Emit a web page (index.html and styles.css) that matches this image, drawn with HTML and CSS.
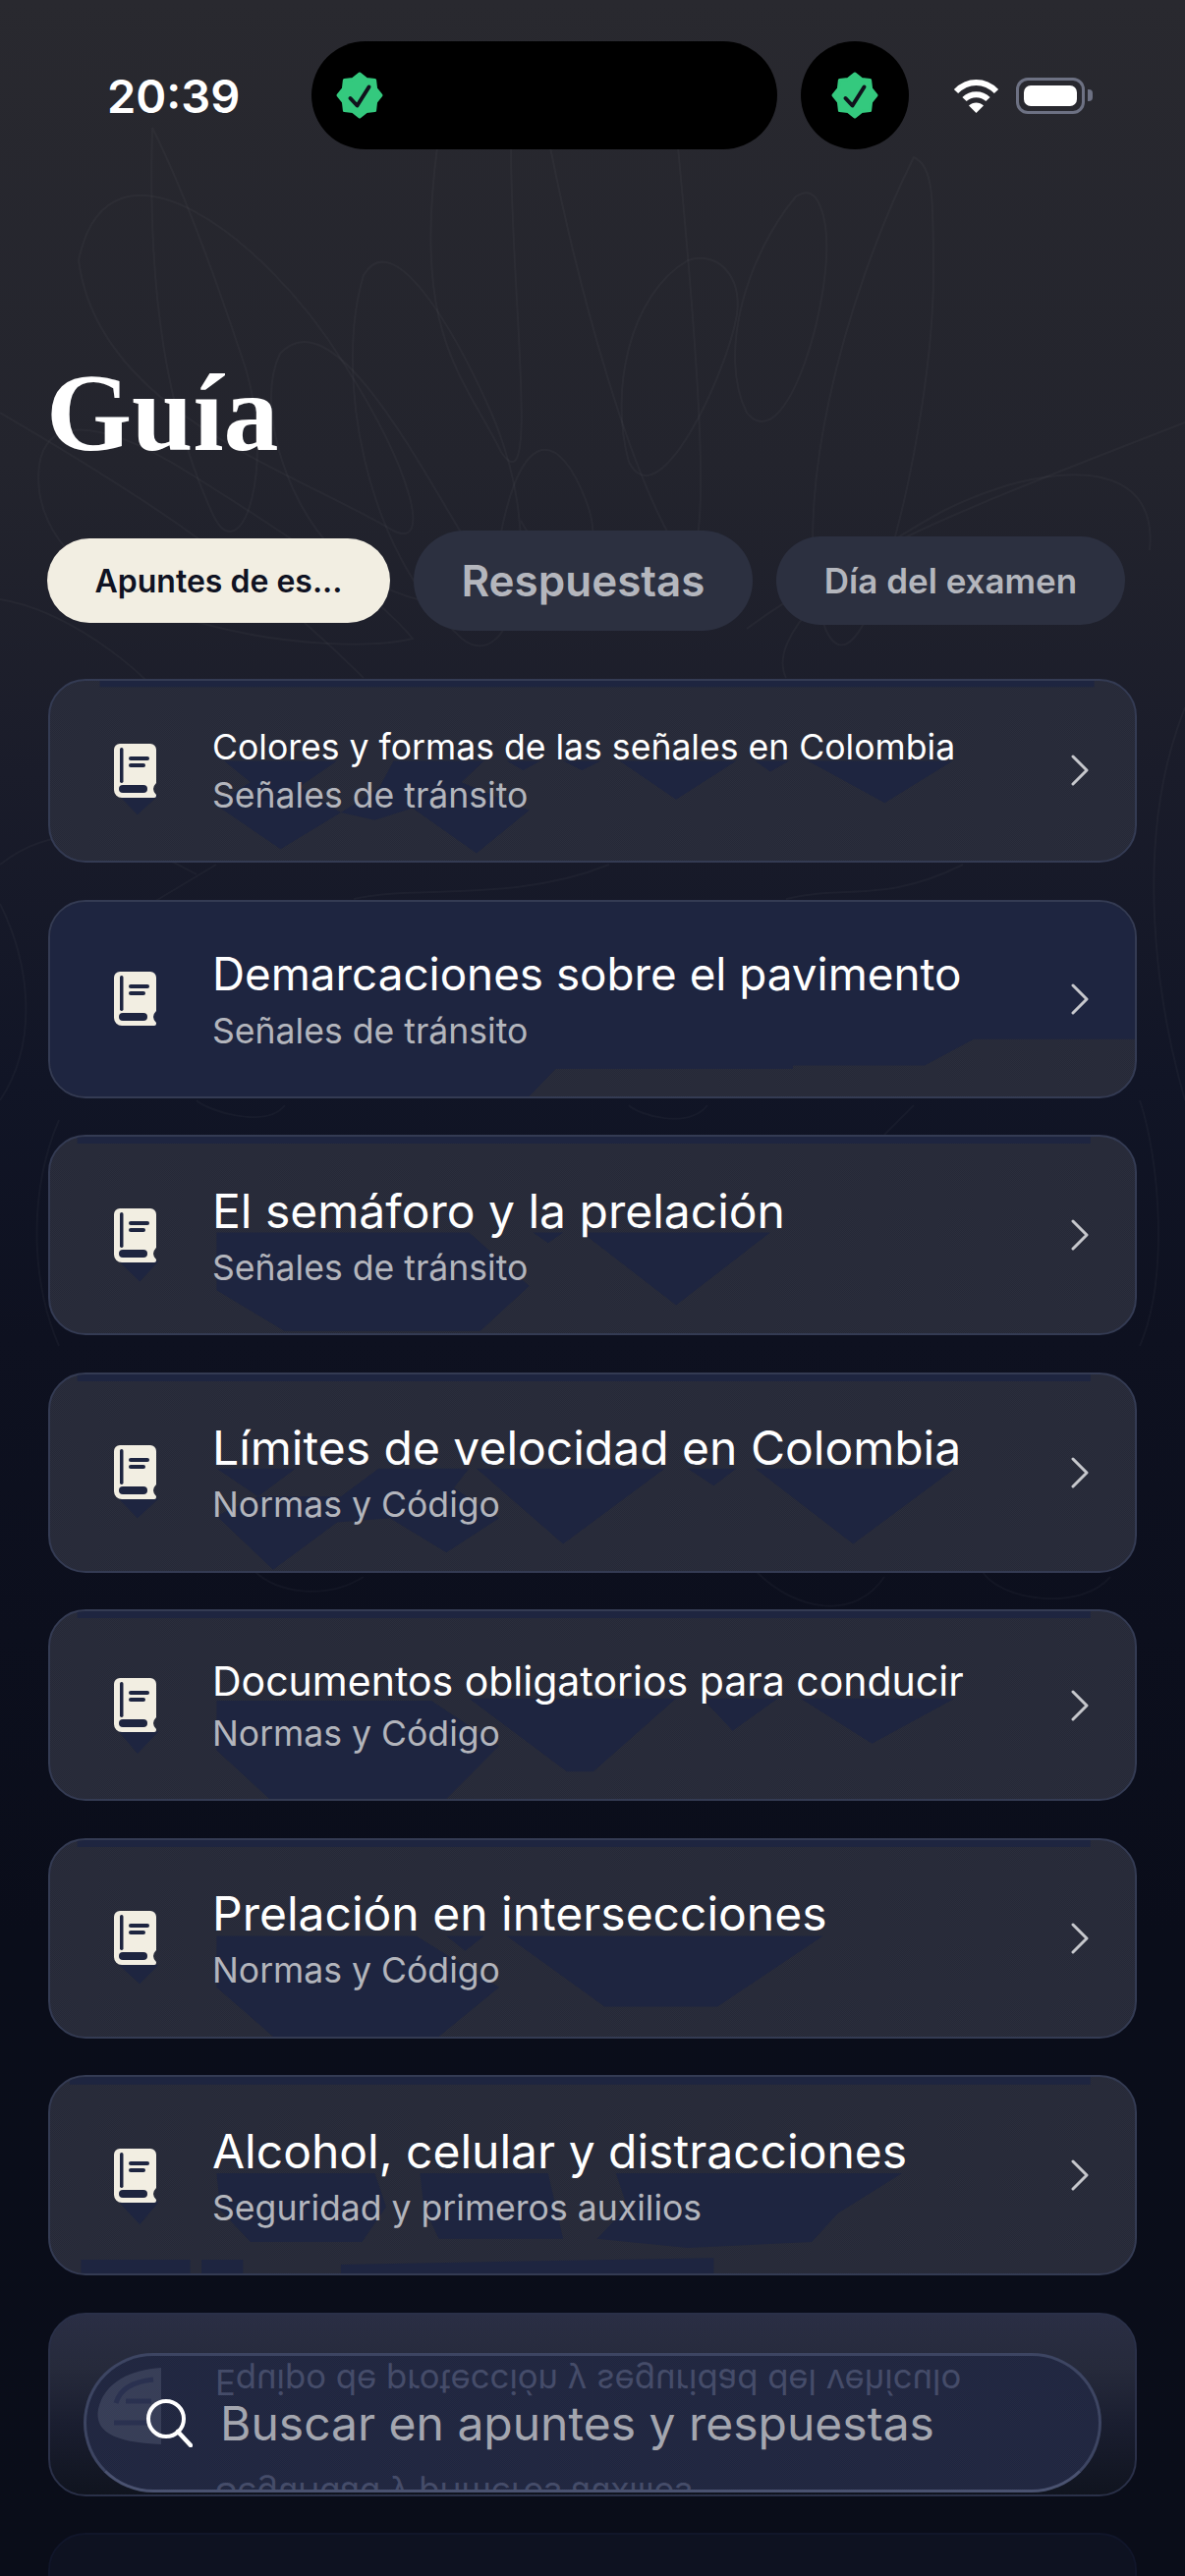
FILE: index.html
```html
<!DOCTYPE html>
<html lang="es">
<head>
    <meta charset="UTF-8">
    <meta name="viewport" content="width=device-width, initial-scale=1.0">
    <title>Guía</title>
    <link rel="stylesheet" href="styles.css">
</head>
<body>
<div class="page">
    <!-- faint scribbles behind everything -->
    <svg class="scribbles" viewBox="0 0 1206 2622" fill="none">
        <path d="M155 130C150 300 170 420 215 520C245 590 285 470 245 360C225 300 190 200 155 130Z"/>
        <path d="M370 280C340 380 370 560 470 650C520 690 560 560 500 420C460 330 400 230 370 280Z"/>
        <path d="M445 150C420 340 470 380 510 460C550 520 520 300 520 150"/>
        <path d="M560 150C590 300 640 480 690 560C730 610 710 360 690 150"/>
        <path d="M810 200C760 260 730 360 760 420C800 470 850 300 840 230C835 200 825 190 810 200Z"/>
        <path d="M930 160C860 300 800 520 840 640C880 730 950 430 950 280C950 200 950 170 930 160Z"/>
        <path d="M700 265C640 300 620 400 640 470C670 530 740 380 750 320C755 280 730 255 700 265Z"/>
        <path d="M80 345C110 200 270 320 350 450C420 560 440 640 400 620C300 560 100 500 80 345Z" transform="translate(0 -80)"/>
        <path d="M285 360C340 300 430 480 480 560C520 620 420 640 340 560C290 510 260 410 285 360Z"/>
        <path d="M40 500C30 410 110 430 190 480C270 530 380 600 420 650C340 670 60 640 40 500Z"/>
        <path d="M0 420C120 490 250 570 370 690"/>
        <path d="M1206 430C1080 480 880 550 760 640"/>
        <path d="M1170 560C1180 460 1060 470 960 520C850 580 780 650 800 690"/>
        <path d="M500 610C520 420 570 430 600 520C620 600 550 570 530 530"/>
        <path d="M0 610C60 620 140 670 190 740"/>
        <path d="M0 880C50 840 110 840 200 890"/>
        <path d="M1206 720C1150 860 1180 1030 1206 1120"/>
        <path d="M0 1120C40 1060 30 980 0 920"/>
        <path d="M1160 1120C1180 1180 1190 1300 1160 1370"/>
        <path d="M60 1140C30 1210 30 1300 60 1370"/>
        <path d="M220 880L120 940M620 880C520 920 420 900 360 915M980 880C900 920 860 900 800 915"/>
        <path d="M200 1120C210 1130 270 1150 290 1125M640 1125C650 1135 700 1150 720 1125M930 1125L900 1155"/>
        <path d="M260 1600C280 1620 330 1630 370 1605M770 1600C810 1640 870 1650 900 1605M1000 1600C1020 1630 1100 1640 1130 1605"/>
    </svg>

    <header class="status-bar">
        <span class="clock">20:39</span>
        <div class="island">
            <svg class="badge" viewBox="0 0 48 48"><path class="badge-shape" d="M24 2L30.9 7.4L39.6 8.4L40.6 17.1L46 24L40.6 30.9L39.6 39.6L30.9 40.6L24 46L17.1 40.6L8.4 39.6L7.4 30.9L2 24L7.4 17.1L8.4 8.4L17.1 7.4Z"/><path class="badge-check" d="M14.5 27L21.5 34.5L33.5 15.5"/></svg>
        </div>
        <div class="island-dot">
            <svg class="badge" viewBox="0 0 48 48"><path class="badge-shape" d="M24 2L30.9 7.4L39.6 8.4L40.6 17.1L46 24L40.6 30.9L39.6 39.6L30.9 40.6L24 46L17.1 40.6L8.4 39.6L7.4 30.9L2 24L7.4 17.1L8.4 8.4L17.1 7.4Z"/><path class="badge-check" d="M14.5 27L21.5 34.5L33.5 15.5"/></svg>
        </div>
        <svg class="wifi" viewBox="0 0 47 35" fill="none">
            <path d="M3 13C15 1 32 1 44 13" stroke="#fff" stroke-width="6"/>
            <path d="M11.5 21C18 14.500 29 14.500 35.500 21" stroke="#fff" stroke-width="6"/>
            <path d="M16 27.500C20 23.500 27 23.500 31 27.500L23.500 35Z" fill="#fff"/>
        </svg>
        <div class="battery"><div class="battery-fill"></div></div>
        <div class="battery-cap"></div>
    </header>

    <h1 class="page-title">Guía</h1>

    <nav class="tabs">
        <div class="tab tab-active">Apuntes de es...</div>
        <div class="tab tab-big">Respuestas</div>
        <div class="tab tab-mid">Día del examen</div>
    </nav>

    <div class="list">
        <div class="row row-small">
            <svg class="blot" viewBox="64 24 1440 418" preserveAspectRatio="none">
                <path d="M130 24H1450V38H130Z"/>
                <path d="M155 290H208L180 335Z"/>
                <path d="M295 210H445L395 270L450 330L370 415L282 310L330 260Z"/>
                <path d="M520 210H640L610 260L700 325L630 425L545 320L495 348L450 330L500 275Z"/>
                <path d="M670 210H715L692 232ZM745 210H795L770 232ZM820 210H975L895 300ZM1000 210H1045L1020 235ZM1070 210H1262L1172 308Z"/>
            </svg>
            <svg class="book" viewBox="0 0 43 55"><use href="#book"/></svg>
            <div class="row-text">
                <div class="row-title">Colores y formas de las señales en Colombia</div>
                <div class="row-sub">Señales de tránsito</div>
            </div>
            <svg class="chevron" viewBox="0 0 18 32"><path d="M2 2L16 16L2 30"/></svg>
        </div>

        <div class="row row-flat">
            <svg class="blot" viewBox="64 525 1440 452" preserveAspectRatio="none">
                <path d="M64 525H1504V844H1290L1225 905H1050V913H735L700 977H64Z"/>
            </svg>
            <svg class="book" viewBox="0 0 43 55"><use href="#book"/></svg>
            <div class="row-text">
                <div class="row-title title-flat">Demarcaciones sobre el pavimento</div>
                <div class="row-sub">Señales de tránsito</div>
            </div>
            <svg class="chevron" viewBox="0 0 18 32"><path d="M2 2L16 16L2 30"/></svg>
        </div>

        <div class="row">
            <svg class="blot" viewBox="64 1062 1440 458" preserveAspectRatio="none">
                <path d="M100 1062H1445V1078H100Z"/>
                <path d="M155 1352H208L183 1400Z"/>
                <path d="M285 1285H620L700 1410L635 1515H375L285 1420Z"/>
                <path d="M705 1285H745L725 1310ZM770 1285H1020L895 1455Z"/>
            </svg>
            <svg class="book" viewBox="0 0 43 55"><use href="#book"/></svg>
            <div class="row-text">
                <div class="row-title title-big">El semáforo y la prelación</div>
                <div class="row-sub">Señales de tránsito</div>
            </div>
            <svg class="chevron" viewBox="0 0 18 32"><path d="M2 2L16 16L2 30"/></svg>
        </div>

        <div class="row">
            <svg class="blot" viewBox="64 36 1440 457" preserveAspectRatio="none">
                <path d="M100 36H1445V52H100Z"/>
                <path d="M155 325H208L180 370Z"/>
                <path d="M285 255H390L340 320L285 365L360 490L445 380L515 370L590 450L660 370L600 300L620 255H500L450 320L340 320Z"/>
                <path d="M630 255H880L745 430ZM910 255H975L945 295ZM1000 255H1265L1130 430Z"/>
            </svg>
            <svg class="book" viewBox="0 0 43 55"><use href="#book"/></svg>
            <div class="row-text">
                <div class="row-title title-big">Límites de velocidad en Colombia</div>
                <div class="row-sub">Normas y Código</div>
            </div>
            <svg class="chevron" viewBox="0 0 18 32"><path d="M2 2L16 16L2 30"/></svg>
        </div>

        <div class="row row-mid">
            <svg class="blot" viewBox="64 578 1440 435" preserveAspectRatio="none">
                <path d="M100 578H1445V594H100Z"/>
                <path d="M155 857H208L180 908Z"/>
                <path d="M285 785H570L660 890L590 1013H355L285 900Z"/>
                <path d="M620 780H895L785 950H750ZM930 780H1030L970 855ZM1060 780H1265L1155 885Z"/>
            </svg>
            <svg class="book" viewBox="0 0 43 55"><use href="#book"/></svg>
            <div class="row-text">
                <div class="row-title title-mid">Documentos obligatorios para conducir</div>
                <div class="row-sub">Normas y Código</div>
            </div>
            <svg class="chevron" viewBox="0 0 18 32"><path d="M2 2L16 16L2 30"/></svg>
        </div>

        <div class="row">
            <svg class="blot" viewBox="64 1097 1440 458" preserveAspectRatio="none">
                <path d="M100 1097H1445V1113H100Z"/>
                <path d="M155 1388H208L183 1432Z"/>
                <path d="M285 1320H550L660 1440L580 1555H360L285 1440Z"/>
                <path d="M590 1320H640L615 1355ZM670 1320H1090L950 1485H800Z"/>
            </svg>
            <svg class="book" viewBox="0 0 43 55"><use href="#book"/></svg>
            <div class="row-text">
                <div class="row-title title-big">Prelación en intersecciones</div>
                <div class="row-sub">Normas y Código</div>
            </div>
            <svg class="chevron" viewBox="0 0 18 32"><path d="M2 2L16 16L2 30"/></svg>
        </div>

        <div class="row">
            <svg class="blot" viewBox="64 94 1440 614" preserveAspectRatio="none">
                <path d="M90 94H1445V118H90Z"/>
                <path d="M155 485H208L183 555Z"/>
                <path d="M285 395H495L510 500L478 610H330L290 510Z"/>
                <path d="M555 395H725L745 600H580L560 500Z"/>
                <path d="M815 395H1195L1110 520L1075 610L910 628L790 600L830 500Z"/>
                <path d="M105 665H250V708H105ZM265 665H320V708H265ZM450 680L945 660V708H450Z"/>
            </svg>
            <svg class="book" viewBox="0 0 43 55"><use href="#book"/></svg>
            <div class="row-text">
                <div class="row-title title-big">Alcohol, celular y distracciones</div>
                <div class="row-sub">Seguridad y primeros auxilios</div>
            </div>
            <svg class="chevron" viewBox="0 0 18 32"><path d="M2 2L16 16L2 30"/></svg>
        </div>

        <div class="row row-fading"></div>
        <div class="row row-gone"></div>
    </div>

    <div class="search">
        <div class="search-mirror mirror-title">Equipo de protección y seguridad del vehículo</div>
        <div class="search-mirror mirror-sub">Seguridad y primeros auxilios</div>
        <svg class="search-ghost" viewBox="0 0 75 100" fill="none">
            <path d="M70 6C40 8 12 20 6 48C2 70 20 82 70 84Z" fill="#59617a" fill-opacity="0.4"/>
            <path d="M62 18C42 20 28 28 24 42M60 40H34M60 62H22" stroke="#2a3150" stroke-width="5"/>
        </svg>
        <svg class="search-icon" viewBox="0 0 48 50" fill="none">
            <circle cx="21" cy="21" r="18" stroke="#fff" stroke-width="4"/>
            <path d="M33 34L46 48" stroke="#fff" stroke-width="4.500" stroke-linecap="round"/>
        </svg>
        <span class="search-text">Buscar en apuntes y respuestas</span>
    </div>

    <!-- shared book icon -->
    <svg class="defs" width="0" height="0">
        <symbol id="book" viewBox="0 0 43 55">
            <path fill="#f2eee2" d="M6 0H37A6 6 0 0 1 43 6V40Q37 46 43 52V53A2 2 0 0 1 41 55H8A8 8 0 0 1 0 47V6A6 6 0 0 1 6 0Z"/>
            <rect x="6" y="4" width="3.500" height="36" rx="1.700" fill="#1e2540"/>
            <rect x="15" y="13" width="21" height="4" rx="2" fill="#1e2540"/>
            <rect x="15" y="20" width="17" height="4" rx="2" fill="#1e2540"/>
            <rect x="5" y="42" width="29" height="8" rx="4" fill="#1e2540"/>
        </symbol>
    </svg>
</div>
</body>
</html>
```

FILE: styles.css
```css
* {
    box-sizing: border-box;
}

body {
    margin: 0;
    background: #0b0e1b;
    font-family: Inter, "Noto Sans", sans-serif;
    color: white;
}

.page {
    position: relative;
    width: 1206px;
    height: 2622px;
    overflow: hidden;
    padding-top: 42px;
    background: linear-gradient(180deg, #29292f 0%, #23242d 18%, #1a1c2a 30%, #111526 42%, #0e1120 52%, #0a0d1a 75%, #0a0d19 100%);
}

.scribbles {
    position: absolute;
    top: 0;
    left: 0;
    width: 1206px;
    height: 2622px;
}

.scribbles path {
    stroke: rgba(255, 255, 255, 0.03);
    stroke-width: 2;
}

.defs {
    position: absolute;
}

/* status bar */
.status-bar {
    position: relative;
    display: flex;
    align-items: center;
    height: 110px;
    padding-left: 109px;
}

.clock {
    width: 208px;
    font-size: 47px;
    font-weight: 600;
}

.island {
    display: flex;
    align-items: center;
    width: 474px;
    height: 110px;
    padding-left: 25px;
    border-radius: 55px;
    background: #000;
}

.island-dot {
    display: flex;
    align-items: center;
    justify-content: center;
    width: 110px;
    height: 110px;
    margin-left: 24px;
    border-radius: 50%;
    background: #000;
}

.badge {
    width: 48px;
    height: 48px;
}

.badge-shape {
    fill: #34c97e;
    stroke: #34c97e;
    stroke-width: 3;
    stroke-linejoin: round;
}

.badge-check {
    fill: none;
    stroke: #10121c;
    stroke-width: 4;
    stroke-linecap: round;
    stroke-linejoin: round;
}

.wifi {
    width: 47px;
    height: 35px;
    margin-left: 45px;
}

.battery {
    width: 70px;
    height: 37px;
    margin-left: 17px;
    padding: 5px;
    border: 3px solid #6d7183;
    border-radius: 12px;
}

.battery-fill {
    height: 100%;
    border-radius: 7px;
    background: #fff;
}

.battery-cap {
    width: 5px;
    height: 12px;
    margin-left: 3px;
    border-radius: 0 4px 4px 0;
    background: #6d7183;
}

/* title and tabs */
.page-title {
    position: relative;
    margin: 0;
    padding: 213px 0 0 47px;
    font-family: "Liberation Serif", serif;
    font-size: 112px;
    font-weight: 700;
    line-height: 110px;
}

.tabs {
    position: relative;
    display: flex;
    align-items: center;
    gap: 24px;
    height: 102px;
    margin: 65px 0 0 48px;
    font-weight: 600;
}

.tab {
    display: flex;
    align-items: center;
    justify-content: center;
    border-radius: 45px;
    background: #2c3040;
    color: #b4b6bd;
}

.tab-active {
    width: 349px;
    height: 86px;
    background: #f2eee2;
    color: #0f1222;
    font-size: 32px;
}

.tab-big {
    width: 345px;
    height: 102px;
    border-radius: 51px;
    font-size: 44px;
}

.tab-mid {
    width: 355px;
    height: 90px;
    font-size: 35px;
}

/* cards */
.list {
    position: relative;
    display: flex;
    flex-direction: column;
    gap: 37.5px;
    margin: 49px 49px 0;
}

.row {
    position: relative;
    display: flex;
    align-items: center;
    overflow: hidden;
    padding: 46.5px 47px 46.5px 65px;
    border: 2px solid #343b53;
    border-radius: 38px;
    background: repeating-conic-gradient(#2b2e3c 0 25%, #252837 0 50%) 0 0 / 2px 2px;
}

.row-small {
    padding-block: 45px 46px;
}

.row-small .row-sub {
    margin-top: 6px;
}

.row-flat {
    padding-block: 45.5px;
}

.row-fading {
    height: 187px;
    background: linear-gradient(180deg, #2a2e44 0%, #262a3b 30%, #1a1e30 60%, #10141f 100%);
    border-color: #2a3048;
}

.row-gone {
    height: 187px;
    background: #0e1221;
    border-color: #11162a;
}

.blot {
    position: absolute;
    top: 0;
    left: 0;
    width: 100%;
    height: 100%;
}

.blot path {
    fill: #1e2540;
}

.book {
    position: relative;
    flex: none;
    width: 43px;
    height: 55px;
}

.row-text {
    position: relative;
    flex: 1;
    margin-left: 57px;
}

.row-title {
    font-size: 35.6px;
    line-height: 46px;
    color: #fff;
}

.title-big {
    font-size: 48px;
    line-height: 58px;
}

.title-flat {
    font-size: 45.8px;
    line-height: 58px;
}

.title-mid {
    font-size: 41px;
    line-height: 49px;
}

.row-sub {
    margin-top: 9px;
    font-size: 35.6px;
    line-height: 40px;
    color: #b3b5bc;
}

.chevron {
    position: relative;
    flex: none;
    width: 18px;
    height: 32px;
    fill: none;
    stroke: #c6c7cc;
    stroke-width: 3;
    stroke-linecap: round;
    stroke-linejoin: round;
}

/* floating search */
.search {
    position: absolute;
    top: 2395px;
    left: 85px;
    display: flex;
    align-items: center;
    width: 1036px;
    height: 142px;
    overflow: hidden;
    padding-left: 60px;
    border: 3px solid #3d4562;
    border-bottom-color: #4a5270;
    border-radius: 71px;
    background: repeating-conic-gradient(#252a42 0 25%, #1e2540 0 50%) 0 0 / 2px 2px;
}

.search-mirror {
    position: absolute;
    left: 131px;
    transform: scaleY(-1);
    white-space: nowrap;
    color: #454c69;
}

.mirror-title {
    top: 4px;
    font-size: 34.7px;
    line-height: 46px;
}

.mirror-sub {
    top: 122px;
    font-size: 34.7px;
    line-height: 40px;
}

.search-ghost {
    position: absolute;
    top: 6px;
    left: 6px;
    width: 75px;
    height: 100px;
}

.search-icon {
    position: relative;
    flex: none;
    width: 48px;
    height: 50px;
}

.search-text {
    position: relative;
    margin-left: 28px;
    font-size: 48px;
    color: #a4a6af;
}
```
